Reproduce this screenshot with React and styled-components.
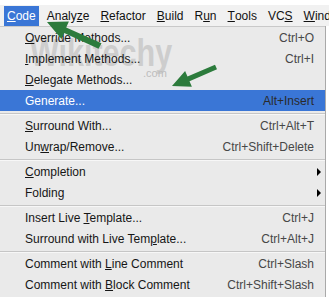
import React from "react";
import styled, { createGlobalStyle } from "styled-components";

const Global = createGlobalStyle`
  html, body { margin: 0; padding: 0; background: #ffffff; }
  body { font-family: "Liberation Sans", Arial, sans-serif; }
`;

const Screen = styled.div`
  position: relative;
  width: 329px;
  height: 297px;
  overflow: hidden;
  display: flex;
  flex-direction: column;
  background: #ffffff;
  font-family: "Liberation Sans", Arial, sans-serif;
  font-size: 12px;
`;

const TopStrip = styled.div`
  height: 5px;
  background: #ffffff;
`;

const MenuBar = styled.div`
  height: 21px;
  display: flex;
  align-items: flex-end;
  gap: 5px;
  padding-left: 4px;
  background: #f1f1f1;
`;

const BarItem = styled.div`
  height: 20px;
  display: flex;
  align-items: center;
  padding: 0 3px;
  color: ${(p) => (p.$active ? "#ffffff" : "#111111")};
  background: ${(p) => (p.$active ? "#3a76d6" : "transparent")};
  white-space: nowrap;
`;

const Body = styled.div`
  flex: 1;
  display: flex;
`;

const Popup = styled.div`
  position: relative;
  width: 325px;
  background: #eaeaea;
  border-top: 1px solid #c9c9c9;
  display: flex;
  flex-direction: column;
`;

const Editor = styled.div`
  flex: 1;
  background: #ffffff;
  border-left: 1px solid #a9a9a9;
`;

const Row = styled.div`
  position: relative;
  z-index: 1;
  height: 21px;
  display: flex;
  align-items: center;
  padding: 0 11px 0 25px;
  background: ${(p) => (p.$selected ? "#3a76d6" : "transparent")};
`;

const Label = styled.span`
  flex: 1;
  white-space: nowrap;
  color: ${(p) => (p.$selected ? "#ffffff" : "#161616")};
`;

const Shortcut = styled.span`
  white-space: nowrap;
  color: ${(p) => (p.$selected ? "#2a2a2a" : "#474747")};
`;

const SubArrow = styled.span`
  width: 0;
  height: 0;
  margin-right: -7px;
  border-top: 4px solid transparent;
  border-bottom: 4px solid transparent;
  border-left: 4px solid #000000;
`;

const Separator = styled.div`
  height: 4px;
  display: flex;
  align-items: center;
  &::after {
    content: "";
    flex: 1;
    height: 1px;
    background: #c6c6c6;
    box-shadow: 0 1px 0 #f7f7f7;
  }
`;

const Watermark = styled.div`
  position: absolute;
  z-index: 0;
  left: 30px;
  top: 6px;
  font-family: "Liberation Sans", Arial, sans-serif;
  font-weight: bold;
  font-size: 30.5px;
  line-height: 1;
  color: #cdcdcd;
  transform: scaleY(1.25);
  transform-origin: left top;
  pointer-events: none;
`;

const WatermarkDot = styled.div`
  position: absolute;
  z-index: 0;
  left: 143px;
  top: 40px;
  font-size: 11px;
  color: #bdbdbd;
  pointer-events: none;
`;

const Overlay = styled.svg`
  position: absolute;
  left: 0;
  top: 0;
  z-index: 5;
  pointer-events: none;
`;

const M = ({ children }) => <u>{children}</u>;

const items = [
  { label: <><M>O</M>verride Methods...</>, sc: "Ctrl+O" },
  { label: <><M>I</M>mplement Methods...</>, sc: "Ctrl+I" },
  { label: <><M>D</M>elegate Methods...</>, sc: "" },
  { label: <>Generate...</>, sc: "Alt+Insert", selected: true },
  "sep",
  { label: <><M>S</M>urround With...</>, sc: "Ctrl+Alt+T" },
  { label: <>Un<M>w</M>rap/Remove...</>, sc: "Ctrl+Shift+Delete" },
  "sep",
  { label: <><M>C</M>ompletion</>, sub: true },
  { label: <>Folding</>, sub: true },
  "sep",
  { label: <>Insert Live <M>T</M>emplate...</>, sc: "Ctrl+J" },
  { label: <>Surround with Live Tem<M>p</M>late...</>, sc: "Ctrl+Alt+J" },
  "sep",
  { label: <>Comment with <M>L</M>ine Comment</>, sc: "Ctrl+Slash" },
  { label: <>Comment with <M>B</M>lock Comment</>, sc: "Ctrl+Shift+Slash" },
];

const bar = [
  [<><M>C</M>ode</>, true],
  [<>Analy<M>z</M>e</>],
  [<><M>R</M>efactor</>],
  [<><M>B</M>uild</>],
  [<>R<M>u</M>n</>],
  [<><M>T</M>ools</>],
  [<>VC<M>S</M></>],
  [<><M>W</M>indow</>],
];

export default function App() {
  return (
    <>
      <Global />
      <Screen>
        <TopStrip />
        <MenuBar>
          {bar.map(([l, a], i) => (
            <BarItem key={i} $active={a}>
              {l}
            </BarItem>
          ))}
        </MenuBar>
        <Body>
          <Popup>
            <Watermark>Wikitechy</Watermark>
            <WatermarkDot>.com</WatermarkDot>
            {items.map((it, i) =>
              it === "sep" ? (
                <Separator key={i} />
              ) : (
                <Row key={i} $selected={it.selected}>
                  <Label $selected={it.selected}>{it.label}</Label>
                  {it.sub ? (
                    <SubArrow />
                  ) : (
                    <Shortcut $selected={it.selected}>{it.sc}</Shortcut>
                  )}
                </Row>
              )
            )}
          </Popup>
          <Editor />
        </Body>
        <Overlay width="329" height="297" viewBox="0 0 329 297">
          <polygon
            fill="#2c7b3c"
            points="101.5,43.2 66.2,27.6 68.9,21.5 47,22 61.5,38.9 64.2,32.9 98.5,48.8"
          />
          <polygon
            fill="#2c7b3c"
            points="217,69.3 189.5,81.2 191.9,86.7 172,86 185.1,71.1 187.5,76.6 215,64.7"
          />
        </Overlay>
      </Screen>
    </>
  );
}
